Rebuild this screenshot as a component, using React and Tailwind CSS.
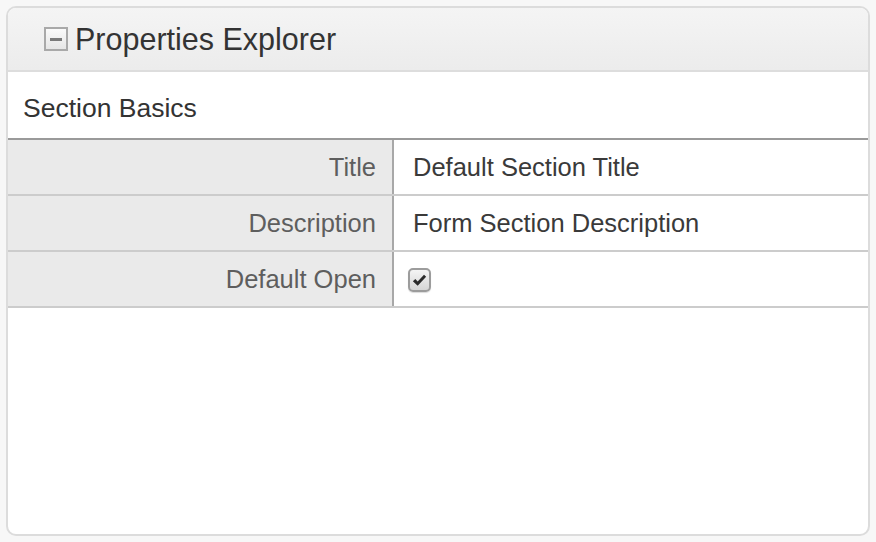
export default function App() {
  const rows = [
    { label: "Title", value: "Default Section Title" },
    { label: "Description", value: "Form Section Description" },
    { label: "Default Open", check: true },
  ];
  return (
    <div
      className="min-h-screen bg-[#f7f7f7] p-[6px]"
      style={{ fontFamily: '"Liberation Sans", Arial, sans-serif' }}
    >
      <div className="flex h-[530px] flex-col overflow-hidden rounded-[10px] border-2 border-[#dcdcdc] bg-white">
        <div className="flex h-[64px] shrink-0 items-center border-b-2 border-[#dddddd] bg-gradient-to-b from-[#f4f4f4] to-[#ececec] pl-[36px]">
          <div className="flex h-[24px] w-[24px] items-center justify-center border-2 border-[#a9a9a9] bg-gradient-to-b from-[#fafafa] to-[#e6e6e6]">
            <div className="h-[3px] w-[12px] bg-[#7a7a7a]" />
          </div>
          <span className="ml-[7px] text-[30.5px] leading-none text-[#333333]">
            Properties Explorer
          </span>
        </div>
        <div className="flex h-[68px] shrink-0 items-center border-b-2 border-[#9a9a9a] pl-[15px] pt-[7px] text-[26.5px] text-[#333333]">
          Section Basics
        </div>
        {rows.map((r) => (
          <div
            key={r.label}
            className="grid h-[56px] shrink-0 grid-cols-[386px_1fr] border-b-2 border-[#cccccc]"
          >
            <div className="flex items-center justify-end border-r-2 border-[#a8a8a8] bg-[#eaeaea] pr-[16px] text-[25.5px] text-[#5e5e5e]">
              {r.label}
            </div>
            <div className="flex items-center pl-[19px] text-[25.5px] text-[#3a3a3a]">
              {r.check ? (
                <div className="-ml-[5px] mt-[2px] flex h-[24px] w-[23px] items-center justify-center rounded-[5px] border-2 border-[#9c9c9c] bg-gradient-to-b from-[#f4f4f4] to-[#d6d6d6] shadow-[0_1px_1px_rgba(0,0,0,0.15)]">
                  <svg width="15" height="13" viewBox="0 0 14 12">
                    <path
                      d="M0.8 6.6 L3.1 4.5 L5.3 7 L11.2 0.6 L13.2 2.5 L5.3 11 Z"
                      fill="#2b2b2b"
                    />
                  </svg>
                </div>
              ) : (
                r.value
              )}
            </div>
          </div>
        ))}
        <div className="flex-1" />
      </div>
    </div>
  );
}
